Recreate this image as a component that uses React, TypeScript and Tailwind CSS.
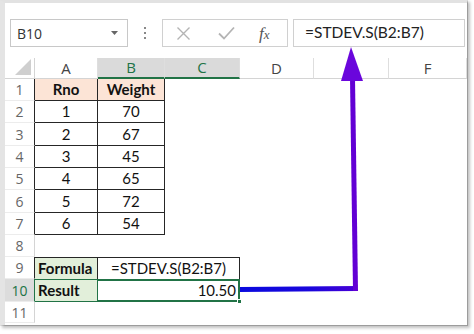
const cellFont = { fontFamily: 'Lato, "Liberation Sans", sans-serif' };
const uiFont = { fontFamily: '"Open Sans", "Liberation Sans", sans-serif' };

const rowHeights = ['h-[22px]', 'h-[22px]', 'h-[23px]', 'h-[22px]', 'h-[22px]', 'h-[23px]', 'h-[22px]', 'h-[22px]', 'h-[22px]', 'h-[23px]', 'h-[21px]'];

const data = [
  ['1', '70'],
  ['2', '67'],
  ['3', '45'],
  ['4', '65'],
  ['5', '72'],
  ['6', '54'],
];

function RowHead({ n, edge }: { n: number; edge: string }) {
  const sel = n === 10;
  return (
    <div
      style={uiFont}
      className={`w-[30px] flex items-center justify-center text-[14px] border-b border-b-[#ececec] border-r ${edge} ${
        sel ? 'bg-[#dcdcdc] text-[#217346]' : 'bg-white text-[#666]'
      }`}
    >
      {n}
    </div>
  );
}

function Blank() {
  return (
    <>
      <div className="w-[75px]" />
      <div className="w-[74px]" />
      <div className="w-[75px]" />
      <div className="w-[78px]" />
    </>
  );
}

function Toolbar() {
  return (
    <div className="h-[55px] flex items-start pt-[16px]">
      <div className="ml-[5px] w-[118px] h-[28px] border border-[#c8c8c8] flex items-center justify-between pl-[6px] pr-[9px]">
        <span style={uiFont} className="text-[14px] text-[#333]">B10</span>
        <svg width="7" height="4" viewBox="0 0 7 4">
          <path d="M0 0 H7 L3.5 4 Z" fill="#666" />
        </svg>
      </div>
      <div className="w-[34px] h-[28px] flex flex-col items-center justify-center gap-[3px]">
        <div className="w-[2px] h-[2px] bg-[#888]" />
        <div className="w-[2px] h-[2px] bg-[#888]" />
        <div className="w-[2px] h-[2px] bg-[#888]" />
      </div>
      <div className="w-[126px] h-[28px] border border-[#d0d0d0] flex items-center">
        <svg className="ml-[13px]" width="15" height="15" viewBox="0 0 15 15">
          <path d="M1.5 1.5 L13.5 13.5 M13.5 1.5 L1.5 13.5" stroke="#b4b4b4" strokeWidth="1.4" />
        </svg>
        <svg className="ml-[27px]" width="17" height="14" viewBox="0 0 17 14">
          <path d="M1 7.5 L6 12.5 L16 1.5" stroke="#b4b4b4" strokeWidth="1.8" fill="none" />
        </svg>
        <span
          style={{ fontFamily: '"Liberation Serif", "DejaVu Serif", serif' }}
          className="ml-[24px] italic text-[17px] text-[#555] leading-none"
        >
          f<span className="text-[13px]">x</span>
        </span>
      </div>
      <div className="ml-[5px] w-[172px] h-[28px] border border-[#d0d0d0] flex items-center pl-[11px]">
        <span style={cellFont} className="text-[15.5px] text-[#222]">=STDEV.S(B2:B7)</span>
      </div>
    </div>
  );
}

function HeaderRow() {
  const cols: [string, string, boolean][] = [
    ['A', 'w-[63px]', false],
    ['B', 'w-[67px]', true],
    ['C', 'w-[75px]', true],
    ['D', 'w-[74px]', false],
    ['E', 'w-[75px]', false],
    ['F', 'w-[78px]', false],
  ];
  return (
    <div className="flex h-[21px]" style={uiFont}>
      <div className="w-[30px] border-r border-b border-[#d4d4d4] relative overflow-hidden">
        <svg className="absolute right-[3px] bottom-[3px]" width="16" height="16" viewBox="0 0 16 16">
          <path d="M16 0 V16 H0 Z" fill="#cfcfcf" />
        </svg>
      </div>
      {cols.map(([l, w, sel]) => (
        <div
          key={l}
          className={`${w} flex items-center justify-center text-[15px] border-r border-r-[#dedede] ${
            sel ? 'bg-[#dadada] text-[#217346] border-b-2 border-b-[#217346]' : 'bg-white text-[#444] border-b border-b-[#d4d4d4]'
          }`}
        >
          {l === 'E' ? '' : l}
        </div>
      ))}
    </div>
  );
}

export default function App() {
  const dark = 'border-[#262626]';
  return (
    <div className="w-[474px] h-[334px] bg-white relative overflow-hidden">
      <div className="w-[468px] h-[326px] border-t-[3px] border-l-[5px] border-t-[#e2e2e2] border-l-[#e4e4e4] border-r border-b border-r-[#9c9c9c] border-b-[#9c9c9c] shadow-[2px_2px_3px_rgba(0,0,0,0.25)] bg-white flex flex-col">
        <Toolbar />
        <HeaderRow />
        <div style={cellFont} className="text-[15px] text-[#111]">
          {/* row 1 */}
          <div className={`flex ${rowHeights[0]}`}>
            <RowHead n={1} edge="border-r-[#262626]" />
            <div className={`w-[63px] bg-[#fce4d6] border-r border-b ${dark} flex items-center justify-center font-bold`}>Rno</div>
            <div className={`w-[67px] bg-[#fce4d6] border-r border-b ${dark} flex items-center justify-center font-bold`}>Weight</div>
            <Blank />
          </div>
          {data.map(([a, b], i) => (
            <div key={a} className={`flex ${rowHeights[i + 1]}`}>
              <RowHead n={i + 2} edge="border-r-[#262626]" />
              <div className={`w-[63px] border-r border-b ${dark} flex items-center justify-center`}>{a}</div>
              <div className={`w-[67px] border-r border-b ${dark} flex items-center justify-center`}>{b}</div>
              <Blank />
            </div>
          ))}
          {/* row 8 */}
          <div className={`flex ${rowHeights[7]}`}>
            <RowHead n={8} edge="border-r-[#d4d4d4]" />
            <div className="w-[63px]" />
            <div className="w-[67px]" />
            <Blank />
          </div>
          {/* row 9 */}
          <div className={`flex ${rowHeights[8]}`}>
            <RowHead n={9} edge="border-r-[#262626]" />
            <div className={`w-[63px] bg-[#e2efda] border-t border-r ${dark} flex items-center pl-[3px] font-bold`}>Formula</div>
            <div className={`w-[142px] border-t border-r ${dark} flex items-center justify-center`}>=STDEV.S(B2:B7)</div>
            <div className="w-[74px]" />
            <div className="w-[75px]" />
            <div className="w-[78px]" />
          </div>
          {/* row 10 */}
          <div className={`flex ${rowHeights[9]}`}>
            <RowHead n={10} edge="border-r-[#217346]" />
            <div className="w-[63px] bg-[#e2efda] border-t border-r border-b border-[#217346] flex items-center pl-[3px] font-bold">Result</div>
            <div className="w-[142px] border-t-2 border-r-2 border-b-2 border-[#217346] flex items-center justify-end pr-[2px] relative">
              10.50
              <div className="absolute right-[-4px] bottom-[-4px] w-[5px] h-[5px] bg-[#217346] border border-white" />
            </div>
            <div className="w-[74px]" />
            <div className="w-[75px]" />
            <div className="w-[78px]" />
          </div>
          {/* row 11 */}
          <div className={`flex ${rowHeights[10]}`}>
            <RowHead n={11} edge="border-r-[#d4d4d4]" />
          </div>
        </div>
      </div>

      <svg className="absolute inset-0 pointer-events-none" width="474" height="334" viewBox="0 0 474 334">
        <defs>
          <linearGradient id="hz" x1="240" y1="0" x2="358" y2="0" gradientUnits="userSpaceOnUse">
            <stop offset="0" stopColor="#0a0ade" />
            <stop offset="0.6" stopColor="#1a06dc" />
            <stop offset="1" stopColor="#4a00d6" />
          </linearGradient>
        </defs>
        <path d="M240 289.5 L357 288.5" stroke="url(#hz)" strokeWidth="5" />
        <path d="M355.5 291 L352.5 78" stroke="#6200d4" strokeWidth="5" />
        <path d="M351 47 L363 81 L341 81 Z" fill="#6a06dc" />
      </svg>
    </div>
  );
}
